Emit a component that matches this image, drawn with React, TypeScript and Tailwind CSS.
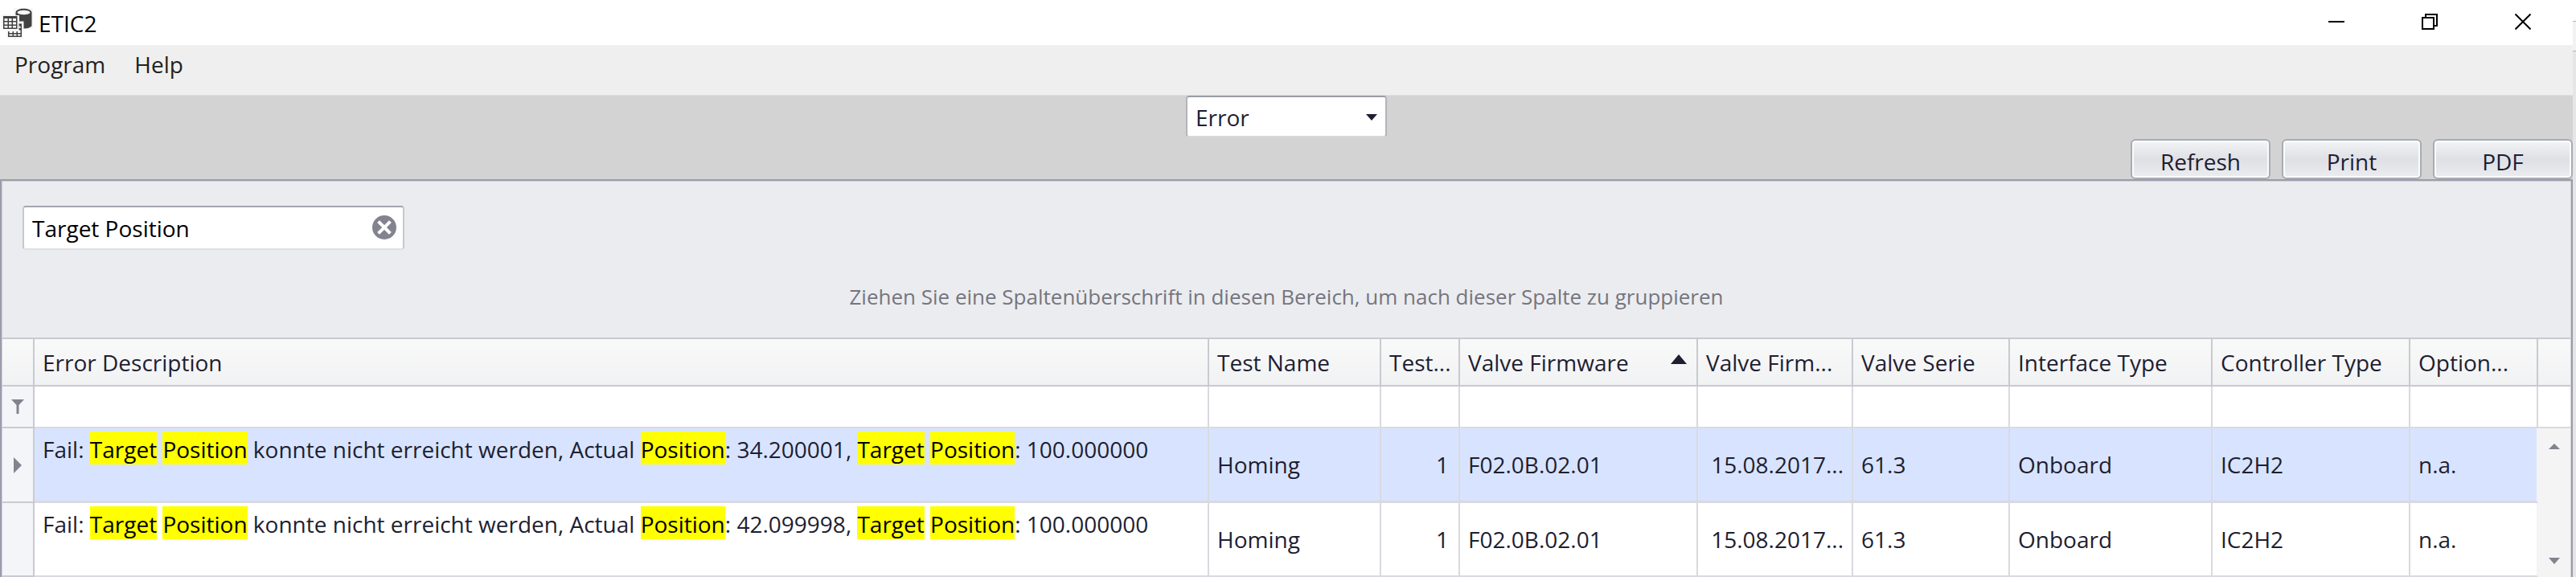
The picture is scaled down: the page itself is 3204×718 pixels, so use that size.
import React from 'react';

const columns = [
  { label: 'Error Description', width: '' },
  { label: 'Test Name', width: 'w-[214px]' },
  { label: 'Test...', width: 'w-[98px]' },
  { label: 'Valve Firmware', width: 'w-[296px]', sorted: true },
  { label: 'Valve Firm...', width: 'w-[193px]' },
  { label: 'Valve Serie', width: 'w-[195px]' },
  { label: 'Interface Type', width: 'w-[252px]' },
  { label: 'Controller Type', width: 'w-[246px]' },
  { label: 'Option...', width: 'w-[159px]' },
];

const rows = [
  { actual: '34.200001', selected: true },
  { actual: '42.099998', selected: false },
];

function Hit({ children }: { children: string }) {
  return <mark className="bg-[#ffff00] pt-[3px] text-black">{children}</mark>;
}

function AppIcon() {
  return (
    <svg className="h-[40px] w-[42px]" viewBox="0 0 42 40" aria-hidden="true">
      <path d="M17 2h24v26H29v12H8V29H2V10h15z" fill="#f6f6f6" />
      <path d="M19.500 7.500 C19.500 1 39.500 1 39.500 7.500 V23.500 C39.500 26 34 27.500 29.500 27.500 V18.500 H24 V11 H19.500z" fill="#414141" />
      <ellipse cx="29.500" cy="7.500" rx="8" ry="2.800" fill="#f4f4f4" />
      <rect x="4" y="12" width="17.500" height="16" fill="#414141" />
      <path d="M5.500 15h4v3h-4zM11 15h3.500v3H11zM16 15h4v3h-4zM5.500 19.500h4v3h-4zM11 19.500h3.500v3H11zM16 19.500h4v3h-4zM5.500 24h4v2.500h-4zM11 24h3.500v2.500H11zM16 24h4v2.500h-4z" fill="#fff" />
      <path d="M10 31h13.500v-9.500H27V38H10z" fill="#414141" />
      <path d="M11.500 31h4v2h-4zM17 31h3.500v2H17zM22 29.500h3.500V33H22zM11.500 34.500h4v2h-4zM17 34.500h3.500v2H17zM22 34.500h3.500v2H22zM23.500 24.500h2v2.500h-2z" fill="#fff" />
    </svg>
  );
}

export default function App() {
  return (
    <div className="flex bg-[#e9e9e9] font-['Open_Sans','Noto_Sans',sans-serif] text-[28px] leading-10 text-[#1e1e32]">
      <div className="min-w-0 flex-1">
        <header className="flex h-14 items-center justify-between bg-white text-black">
          <div className="flex items-center gap-1.5">
            <AppIcon />
            <h1 className="pt-0.5">ETIC2</h1>
          </div>
          <div className="flex h-full pr-1 pb-0.5">
            <button type="button" aria-label="Minimize" className="flex w-[116px] items-center justify-center">
              <svg className="size-5" viewBox="0 0 20 20"><path d="M0 10h20" stroke="#000" strokeWidth="2" /></svg>
            </button>
            <button type="button" aria-label="Restore" className="flex w-[116px] items-center justify-center">
              <svg className="size-5" viewBox="0 0 20 20" fill="none" stroke="#000" strokeWidth="2"><path d="M1 5h14v14H1zM5 5V1h14v14h-4" /></svg>
            </button>
            <button type="button" aria-label="Close" className="flex w-[116px] items-center justify-center">
              <svg className="size-5" viewBox="0 0 20 20" stroke="#000" strokeWidth="2"><path d="M0.500 0.500l19 19M19.500 0.500l-19 19" /></svg>
            </button>
          </div>
        </header>

        <nav className="flex h-[63px] gap-9 border-b border-[#dedede] bg-[#efefef] px-[18px] pt-1 text-[#222]">
          <button type="button" className="self-start">Program</button>
          <button type="button" className="self-start">Help</button>
        </nav>

        <div className="flex flex-col bg-[#d3d3d3]">
          <div className="relative w-[250px] self-center">
            <select
              aria-label="Report"
              className="block h-[52px] w-full appearance-none rounded-sm border-2 border-[#b4b5bb] border-t-[#9c9ea6] border-b-[#d8d8da] bg-white px-2.5 pt-0.5"
            >
              <option>Error</option>
            </select>
            <svg className="pointer-events-none absolute top-[23px] right-3 h-2 w-[14px]" viewBox="0 0 14 8"><path d="M0 0h14L7 8z" fill="#1e1e32" /></svg>
          </div>
          <div className="mt-0.5 flex justify-end gap-[14px]">
            {['Refresh', 'Print', 'PDF'].map((label) => (
              <button
                key={label}
                type="button"
                className="h-[50px] w-[174px] rounded-md border-2 border-[#a9abb5] bg-linear-to-b from-[#f3f4f6] via-[#dfe0e5] to-[#ecedf0] pt-1.5 inset-ring-2 inset-ring-[#fafbfc]"
              >
                {label}
              </button>
            ))}
          </div>
        </div>

        <main className="border-2 border-b-0 border-[#9c9cab] bg-[#ebecef]">
          <div className="border border-b-0 border-[#cfd0d8] px-[25px] pt-[30px]">
            <div className="relative w-[475px]">
              <input
                aria-label="Search"
                defaultValue="Target Position"
                className="block h-[55px] w-full rounded-sm border-2 border-[#c8c9d0] border-t-[#a3a5b1] border-b-[#dfe0e4] bg-white pr-14 pl-2.5 text-black"
              />
              <button type="button" aria-label="Clear search" className="absolute top-3 right-2.5">
                <svg className="block size-[30px]" viewBox="0 0 30 30">
                  <circle cx="15" cy="15" r="15" fill="#83838f" />
                  <path d="M9 9l12 12M21 9L9 21" stroke="#fff" strokeWidth="4" strokeLinecap="square" />
                </svg>
              </button>
            </div>
            <p className="pt-[38px] pb-[31px] text-center text-[26px] leading-10 text-[#75757f]">
              Ziehen Sie eine Spaltenüberschrift in diesen Bereich, um nach dieser Spalte zu gruppieren
            </p>
          </div>

          <div className="border-x border-[#cfd0d8]">
            <table className="w-full table-fixed border-separate border-spacing-0 text-left">
              <thead>
                <tr className="h-[61px]">
                  <th className="w-10 border-y-2 border-r-2 border-[#c9cad1] bg-linear-to-b from-[#f9f9f9] to-[#f1f2f3]" />
                  {columns.map((c) => (
                    <th
                      key={c.label}
                      className={`${c.width} border-y-2 border-r-2 border-[#c9cad1] bg-linear-to-b from-[#f9f9f9] to-[#f1f2f3] py-0 pr-0 pl-2.5 font-normal whitespace-nowrap`}
                    >
                      <span className="flex items-center justify-between pr-3">
                        {c.label}
                        {c.sorted && (
                          <svg className="mb-2 h-3 w-5 shrink-0" viewBox="0 0 20 12"><path d="M0 12h20L10 0z" fill="#1e1e32" /></svg>
                        )}
                      </span>
                    </th>
                  ))}
                  <th className="w-10 border-y-2 border-[#c9cad1] bg-linear-to-b from-[#f9f9f9] to-[#f1f2f3]" />
                </tr>
              </thead>
              <tbody>
                <tr className="h-[52px]">
                  <td className="border-r-2 border-b-2 border-[#c9cad1] bg-[#f4f5f8] p-0">
                    <svg className="mx-auto block h-[18px] w-4" viewBox="0 0 16 18"><path d="M0 0h16L9.500 7v11h-3V7z" fill="#83838f" /></svg>
                  </td>
                  {columns.map((c) => (
                    <td key={c.label} className="border-r-2 border-b-2 border-[#d9d9df] bg-white" />
                  ))}
                  <td className="border-b-2 border-[#d9d9df] bg-white" />
                </tr>
                {rows.map((r, i) => {
                  const cell = `border-r-2 border-[#d9d9df] whitespace-nowrap ${r.selected ? 'border-b-[3px] bg-[#d8e4ff]' : 'border-b-2 bg-white'}`;
                  return (
                    <tr key={r.actual} className={r.selected ? 'h-[93px]' : 'h-[92px]'}>
                      <td className="border-r-2 border-b-2 border-[#c9cad1] bg-[#f4f5f8] p-0">
                        {r.selected && (
                          <svg className="mx-auto block h-5 w-2.5" viewBox="0 0 10 20"><path d="M0 0v20l10-10z" fill="#83838f" /></svg>
                        )}
                      </td>
                      <td className={`${cell} pt-1.5 pl-2.5 align-top`}>
                        Fail: <Hit>Target</Hit> <Hit>Position</Hit> konnte nicht erreicht werden, Actual <Hit>Position</Hit>: {r.actual}, <Hit>Target</Hit> <Hit>Position</Hit>: 100.000000
                      </td>
                      <td className={`${cell} pl-2.5`}>Homing</td>
                      <td className={`${cell} pr-3 text-right`}>1</td>
                      <td className={`${cell} pl-2.5`}>F02.0B.02.01</td>
                      <td className={`${cell} pr-2.5 text-right`}>15.08.2017...</td>
                      <td className={`${cell} pl-2.5`}>61.3</td>
                      <td className={`${cell} pl-2.5`}>Onboard</td>
                      <td className={`${cell} pl-2.5`}>IC2H2</td>
                      <td className={`${cell} border-r-[#f4f4f4] pl-2.5`}>n.a.</td>
                      {i === 0 && (
                        <td rowSpan={rows.length} className="bg-[#f4f4f4] p-0">
                          <div className="flex h-[184px] flex-col items-center justify-between pt-[18px] pb-4">
                            <button type="button" aria-label="Scroll up">
                              <svg className="block h-[7px] w-[14px]" viewBox="0 0 14 7"><path d="M0 7h14L7 0z" fill="#83838f" /></svg>
                            </button>
                            <button type="button" aria-label="Scroll down">
                              <svg className="block h-2 w-[14px]" viewBox="0 0 14 8"><path d="M0 0h14L7 8z" fill="#83838f" /></svg>
                            </button>
                          </div>
                        </td>
                      )}
                    </tr>
                  );
                })}
              </tbody>
            </table>
          </div>
        </main>
      </div>
      <div className="w-1 shrink-0 bg-[#e6e6e6]">
        <div className="h-[26px] bg-white" />
        <div className="h-[38px] border-y border-[#b4b4b4] bg-[#f2f2f2]" />
      </div>
    </div>
  );
}
